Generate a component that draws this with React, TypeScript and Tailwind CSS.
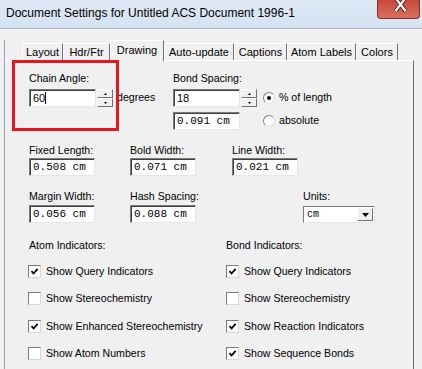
import React from "react";

const sans = "font-['Liberation_Sans',Arial,sans-serif]";
const mono = "font-['Liberation_Mono','Courier_New',monospace]";

const TABS = [
  { label: "Layout", w: "w-[41px]" },
  { label: "Hdr/Ftr", w: "w-[47px]" },
  { label: "Drawing", w: "w-[54px]", active: true },
  { label: "Auto-update", w: "w-[70px]" },
  { label: "Captions", w: "w-[53px]" },
  { label: "Atom Labels", w: "w-[69px]" },
  { label: "Colors", w: "w-[42px]" },
];

function Label({ children }: { children: React.ReactNode }) {
  return <div className="h-[13px] leading-[13px] text-[10.6px] text-black whitespace-nowrap">{children}</div>;
}

function TextBox({
  children,
  w = "w-[66px]",
  font = "",
}: {
  children: React.ReactNode;
  w?: string;
  font?: string;
}) {
  return (
    <div
      className={`h-[18px] ${w} shrink-0 bg-white border border-t-[#7a7a7a] border-l-[#7a7a7a] border-r-[#e6e6e6] border-b-[#e6e6e6] shadow-[inset_1px_1px_0_#404040] flex items-center pl-[3px] text-[11px] leading-none text-black whitespace-pre ${font}`}
    >
      {children}
    </div>
  );
}

function SpinBtn({ up }: { up?: boolean }) {
  return (
    <div className="h-[9px] bg-[#f0f0f0] border border-t-white border-l-white border-r-[#6f6f6f] border-b-[#6f6f6f] flex items-center justify-center">
      <svg width="3" height="2" viewBox="0 0 3 2">
        <path d={up ? "M0 2 L1.5 0 L3 2Z" : "M0 0 L1.5 2 L3 0Z"} fill="#000" />
      </svg>
    </div>
  );
}

function Spinner() {
  return (
    <div className="ml-[1px] w-[16px] shrink-0 flex flex-col">
      <SpinBtn up />
      <SpinBtn />
    </div>
  );
}

function Radio({ checked }: { checked?: boolean }) {
  return (
    <div className="w-[12px] h-[12px] shrink-0 rounded-full bg-white border border-t-[#808080] border-l-[#808080] border-r-[#e0e0e0] border-b-[#e0e0e0] flex items-center justify-center">
      {checked && <div className="w-[4px] h-[4px] rounded-full bg-black" />}
    </div>
  );
}

function Check({ label, checked }: { label: string; checked?: boolean }) {
  return (
    <div className="h-[13px] flex items-center">
      <div className="w-[13px] h-[13px] shrink-0 bg-white border border-t-[#7a7a7a] border-l-[#7a7a7a] border-r-[#d8d8d8] border-b-[#d8d8d8] flex items-center justify-center">
        {checked && (
          <svg width="9" height="9" viewBox="0 0 9 9">
            <path d="M1.5 4.2 L3.6 6.5 L7.6 1.8" stroke="#000" strokeWidth="1.8" fill="none" />
          </svg>
        )}
      </div>
      <span className="ml-[5px] text-[10.6px] leading-[13px] text-black whitespace-nowrap">{label}</span>
    </div>
  );
}

export default function App() {
  return (
    <div className={`w-[422px] h-[369px] overflow-hidden bg-[#f0f0f0] relative ${sans}`}>
      {/* Title bar */}
      <div className="h-[29px] flex items-start bg-gradient-to-b from-[#dfe9f6] to-[#d5e2f1] border-b border-[#a9b7c7]">
        <div className="pl-[6px] pt-[6px] text-[12px] leading-[15px] text-black whitespace-nowrap">
          Document Settings for Untitled ACS Document 1996-1
        </div>
        <div className="ml-auto mr-[2px] w-[43px] h-[19px] rounded-b-[4px] border border-t-0 border-[#8e2f25] bg-gradient-to-b from-[#c7463b] to-[#d8715f] flex justify-center">
          <svg width="13" height="13" viewBox="0 0 13 13" className="ml-[4px]">
            <path d="M1.5 -2 L11.5 11 M11.5 -2 L1.5 11" stroke="#5a1a14" strokeWidth="4" />
            <path d="M1.5 -2 L11.5 11 M11.5 -2 L1.5 11" stroke="#fff" strokeWidth="2.2" />
          </svg>
        </div>
      </div>

      {/* Body */}
      <div className="ml-[4px] border-l border-[#95a4b6] h-[340px]">
        {/* Tabs */}
        <div className="mt-[11px] pl-[17px] h-[20px] flex items-end relative z-10">
          {TABS.map((t) =>
            t.active ? (
              <div
                key={t.label}
                className={`${t.w} h-[21px] -mb-px bg-[#f0f0f0] border-t border-l border-white border-r border-r-[#6f6f6f] flex justify-center pt-[3px] text-[11px] leading-[13px] text-black`}
              >
                {t.label}
              </div>
            ) : (
              <div
                key={t.label}
                className={`${t.w} h-[17px] bg-[#f0f0f0] border-t border-l border-white border-r border-r-[#6f6f6f] flex justify-center pt-[2px] text-[11px] leading-[13px] text-black`}
              >
                {t.label}
              </div>
            )
          )}
        </div>

        {/* Panel */}
        <div className="w-[409px] h-[320px] border-t border-white border-r border-r-[#6f6f6f] pl-[24px] pt-[11px]">
          {/* Row 1 */}
          <div className="flex">
            <div className="w-[144px]">
              <Label>Chain Angle:</Label>
              <div className="mt-[4px] flex items-center">
                <TextBox w="w-[67px]">
                  60<span className="inline-block w-px h-[12px] bg-black" />
                </TextBox>
                <Spinner />
                <span className="ml-[4px] text-[10.6px] text-black">degrees</span>
              </div>
            </div>
            <div>
              <Label>Bond Spacing:</Label>
              <div className="mt-[4px] flex items-center">
                <TextBox w="w-[67px]">18</TextBox>
                <Spinner />
                <div className="ml-[6px]">
                  <Radio checked />
                </div>
                <span className="ml-[4px] text-[10.6px] text-black">% of length</span>
              </div>
              <div className="mt-[5px] flex items-center">
                <TextBox w="w-[67px]" font={mono}>
                  0.091 cm
                </TextBox>
                <div className="ml-[23px]">
                  <Radio />
                </div>
                <span className="ml-[4px] text-[10.6px] text-black">absolute</span>
              </div>
            </div>
          </div>

          {/* Row 2 */}
          <div className="mt-[14px] flex">
            <div className="w-[101px]">
              <Label>Fixed Length:</Label>
              <div className="mt-[1px]">
                <TextBox font={mono}>0.508 cm</TextBox>
              </div>
            </div>
            <div className="w-[102px]">
              <Label>Bold Width:</Label>
              <div className="mt-[1px]">
                <TextBox font={mono}>0.071 cm</TextBox>
              </div>
            </div>
            <div>
              <Label>Line Width:</Label>
              <div className="mt-[1px]">
                <TextBox font={mono}>0.021 cm</TextBox>
              </div>
            </div>
          </div>

          {/* Row 3 */}
          <div className="mt-[14px] flex">
            <div className="w-[101px]">
              <Label>Margin Width:</Label>
              <div className="mt-[2px]">
                <TextBox font={mono}>0.056 cm</TextBox>
              </div>
            </div>
            <div className="w-[173px]">
              <Label>Hash Spacing:</Label>
              <div className="mt-[2px]">
                <TextBox font={mono}>0.088 cm</TextBox>
              </div>
            </div>
            <div>
              <Label>Units:</Label>
              <div className="mt-[3px] w-[72px] h-[17px] bg-white border border-t-[#7a7a7a] border-l-[#7a7a7a] border-r-[#e6e6e6] border-b-[#e6e6e6] flex items-center">
                <span className={`pl-[3px] text-[10px] text-black ${mono}`}>cm</span>
                <div className="ml-auto mr-[1px] w-[16px] h-[13px] bg-[#f0f0f0] border border-t-white border-l-white border-r-[#6f6f6f] border-b-[#6f6f6f] flex items-center justify-center">
                  <svg width="7" height="4" viewBox="0 0 7 4">
                    <path d="M0 0 L7 0 L3.5 4Z" fill="#000" />
                  </svg>
                </div>
              </div>
            </div>
          </div>

          {/* Indicators */}
          <div className="mt-[16px] flex">
            <div className="w-[197px]">
              <Label>Atom Indicators:</Label>
              <div className="-ml-px mt-[13px]">
                <Check label="Show Query Indicators" checked />
              </div>
              <div className="-ml-px mt-[14px]">
                <Check label="Show Stereochemistry" />
              </div>
              <div className="-ml-px mt-[15px]">
                <Check label="Show Enhanced Stereochemistry" checked />
              </div>
              <div className="-ml-px mt-[14px]">
                <Check label="Show Atom Numbers" />
              </div>
            </div>
            <div>
              <Label>Bond Indicators:</Label>
              <div className="mt-[13px]">
                <Check label="Show Query Indicators" checked />
              </div>
              <div className="mt-[14px]">
                <Check label="Show Stereochemistry" />
              </div>
              <div className="mt-[15px]">
                <Check label="Show Reaction Indicators" checked />
              </div>
              <div className="mt-[14px]">
                <Check label="Show Sequence Bonds" checked />
              </div>
            </div>
          </div>
        </div>
      </div>

      {/* Red annotation box */}
      <div className="absolute left-[12px] top-[60px] w-[107px] h-[71px] border-[3px] border-[#e8141e] z-20" />
    </div>
  );
}
